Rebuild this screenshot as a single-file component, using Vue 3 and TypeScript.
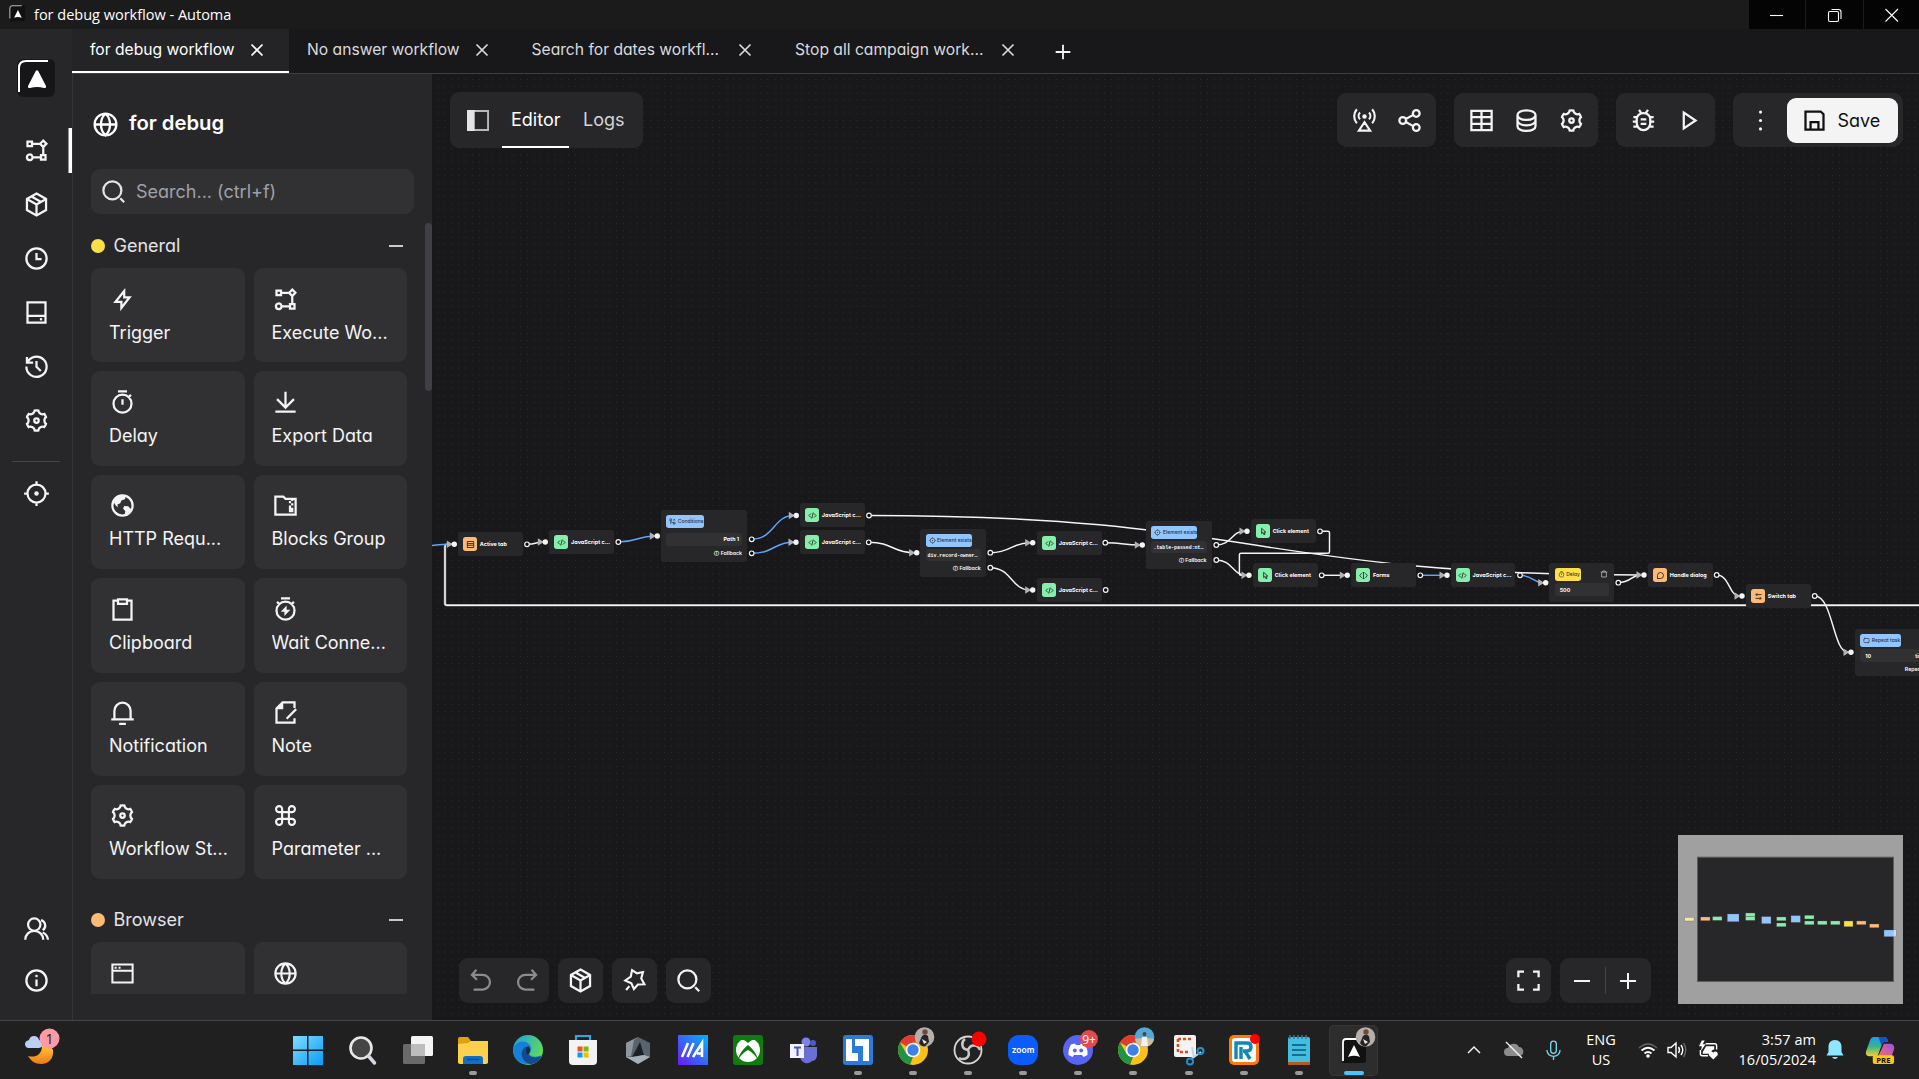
<script setup lang="ts">
interface FlowNode {
  x: number
  y: number
  w: number
  h: number
  label: string
  icon: string
  tone: 'orange' | 'green' | 'blue' | 'yellow'
  kind?: 'badge'
  badgeW?: number
  row?: string
  rowEnd?: string
  align?: 'left' | 'right'
  mono?: boolean
  footer?: string
  trash?: boolean
}

const s = (d: string, w = 2) => `<path d="${d}" fill="none" stroke="currentColor" stroke-width="${w}"/>`

const icons: Record<string, string> = {
  flow: '<path fill-rule="evenodd" d="M6 21.5a3.5 3.5 0 1 1 3.355-4.5H15v-2h2V9.242L14.757 7H9v2H3V3h6v2h5.757L18 1.757 22.243 6 19 9.241V15h2v6h-6v-2H9.355A3.502 3.502 0 0 1 6 21.5zm0-5a1.5 1.5 0 1 0 0 3 1.5 1.5 0 0 0 0-3zm13 .5h-2v2h2v-2zM18 4.586L16.586 6 18 7.414 19.414 6 18 4.586zM7 5H5v2h2V5z"/>',
  box: s('M12 2.2l8.5 4.9v9.8L12 21.8l-8.5-4.9V7.100zM3.500 7.100L12 12l8.500-4.900M12 12v9.800M7.600 4.900l8.500 4.900', 2),
  clock: s('M12 3a9 9 0 1 0 0 18a9 9 0 1 0 0-18M12 7v5.500h4.500'),
  storage: s('M4 3h16v18H4zM4 15h16') + '<path d="M15 17h2v2h-2z"/>',
  history: s('M3.600 9A9 9 0 1 1 3 12M3.500 3.500V8.500H9M12 7v5.200l3.800 3.800'),
  gear: '<path fill-rule="evenodd" d="M3.340 17a10.018 10.018 0 0 1-.978-2.326 3 3 0 0 0 .002-5.347A9.990 9.990 0 0 1 4.865 4.990a3 3 0 0 0 4.631-2.674 9.990 9.990 0 0 1 5.007.002 3 3 0 0 0 4.632 2.672c.579.590 1.093 1.261 1.525 2.010.433.749.757 1.530.978 2.326a3 3 0 0 0-.002 5.347 9.990 9.990 0 0 1-2.501 4.337 3 3 0 0 0-4.631 2.674 9.990 9.990 0 0 1-5.007-.002 3 3 0 0 0-4.632-2.672A10.018 10.018 0 0 1 3.340 17zm5.660.196a4.993 4.993 0 0 1 2.250 2.770c.499.047 1 .048 1.499.001A4.993 4.993 0 0 1 15 17.197a4.993 4.993 0 0 1 3.525-.565c.290-.408.540-.843.748-1.298A4.993 4.993 0 0 1 18 12c0-1.260.470-2.437 1.273-3.334a8.126 8.126 0 0 0-.750-1.298A4.993 4.993 0 0 1 15 6.804a4.993 4.993 0 0 1-2.250-2.770c-.499-.047-1-.048-1.499-.001A4.993 4.993 0 0 1 9 6.803a4.993 4.993 0 0 1-3.525.565 7.990 7.990 0 0 0-.748 1.298A4.993 4.993 0 0 1 6 12c0 1.260-.470 2.437-1.273 3.334a8.126 8.126 0 0 0 .750 1.298A4.993 4.993 0 0 1 9 17.196zM12 15a3 3 0 1 1 0-6 3 3 0 0 1 0 6zm0-2a1 1 0 1 0 0-2 1 1 0 0 0 0 2z"/>',
  target: s('M12 4a8 8 0 1 0 0 16a8 8 0 1 0 0-16M12 1v4M12 19v4M1 12h4M19 12h4') + '<circle cx="12" cy="12" r="2"/>',
  users: s('M2 22a8 8 0 0 1 16 0M10 3a5.500 5.500 0 1 0 0 11a5.500 5.500 0 1 0 0-11M16 4.500a5 5 0 0 1 1.500 9M17.500 15.500A8 8 0 0 1 22.200 22'),
  info: s('M12 3a9 9 0 1 0 0 18a9 9 0 1 0 0-18M12 11v6') + '<path d="M11 7h2v2h-2z"/>',
  globe: s('M12 3a9 9 0 1 0 0 18a9 9 0 1 0 0-18M3 12h18M12 3c-5 4.500-5 13.500 0 18c5-4.500 5-13.500 0-18', 1.900),
  search: s('M11 3a8 8 0 1 0 0 16a8 8 0 1 0 0-16M18 18l3.500 3.500'),
  bolt: s('M13.500 4.500L5.800 14H11v5.500L18.300 10H13.500z'),
  timer: s('M12 5a8 8 0 1 0 0 16a8 8 0 1 0 0-16M8 2h8M12 9v5M17.500 7.200l2-2'),
  download: s('M3 20h18M12 2.500v14M4.500 9L12 16.500L19.500 9'),
  earth: s('M12 3a9 9 0 1 0 0 18a9 9 0 1 0 0-18') + '<path d="M5 5l5-2.500 5 .8-.8 3.200-3.200 1-1 2.500L7.500 11 8 13.500l-2-1.500-1.500-2.500zM13.500 12.500l3.500.2 3.500 3.500-4.500 5-2-1.700.5-2.500-2-2.300z"/>',
  folder: s('M3 4h7l2 2h9v14H3z') + '<path d="M15 8h2v2h-2zM17 10h2v2h-2zM15 12h2v2h-2zM17 8V7h2v1zM15 14h4v4h-4z"/>',
  clipboard: s('M8 4H4v17h16V4h-4M8 3h8v4H8z'),
  timerBolt: s('M12 5a8 8 0 1 0 0 16a8 8 0 1 0 0-16M8 2h8M17.500 7.200l2-2M6.500 7.200l-2-2') + '<path d="M13 8.500v3.700h3.300L11 17.800v-3.900H7.800z"/>',
  bell: s('M4.800 18v-7.500a7.200 7.200 0 0 1 14.400 0V18M2 18h20M9 22h6'),
  note: s('M20 8V3H9.500L4 8.500V21h16v-4M21.500 9L13 17.500') + '<path d="M10 3v6H4z"/>',
  command: s('M9 9h6v6H9zM9 9H6.500a2.700 2.700 0 1 1 2.500-2.500zM15 9V6.500a2.700 2.700 0 1 1 2.500 2.500zM9 15v2.500a2.700 2.700 0 1 1-2.500-2.500zM15 15h2.500a2.700 2.700 0 1 1-2.500 2.500z', 1.900),
  window: s('M3 4h18v16H3zM3 9.500h18', 1.800) + '<path d="M5 6h1.800v1.800H5zM8.500 6h1.800v1.800H8.500z"/>',
  antenna: s('M7 21h10l-5-7.500zM8 10.800a4.300 4.300 0 0 1 0-6M16 10.800a4.300 4.300 0 0 0 0-6M5.200 14.500a9.500 9.500 0 0 1 0-12.500M18.800 14.500a9.500 9.500 0 0 0 0-12.500', 1.900) + '<circle cx="12" cy="8.500" r="2"/>',
  share: s('M6 9a3 3 0 1 0 0 6a3 3 0 1 0 0-6M18 2.700a3 3 0 1 0 0 6a3 3 0 1 0 0-6M18 15.300a3 3 0 1 0 0 6a3 3 0 1 0 0-6M8.700 10.600l6.700-3.600M8.700 13.400l6.700 3.600'),
  table: s('M3 3.500h18v17H3zM3 9h18M3 15h18M12 3.500v17'),
  database: s('M12 3c-5 0-8 2-8 4.200s3 4.300 8 4.300s8-2 8-4.300S17 3 12 3M4 7v5c0 2.300 3 4.300 8 4.300s8-2 8-4.300V7M4 12v5c0 2.300 3 4.300 8 4.300s8-2 8-4.300v-5'),
  bug: s('M12 5.500c-3.500 0-6 2.300-6 5v4a6 6 0 0 0 12 0v-4c0-2.700-2.500-5-6-5M3 9h3M18 9h3M2.500 13H6M18 13h3.500M3 17.500h4M17 17.500h4M8 2.500l2 3M16 2.500l-2 3M9.500 11h5M9.500 15h5'),
  play: s('M7.800 5v14l10.500-7z'),
  dots: '<circle cx="12" cy="4.500" r="1.400"/><circle cx="12" cy="12" r="1.400"/><circle cx="12" cy="19.500" r="1.400"/>',
  save: s('M4 4h13.500L20 6.500V20H4zM8.500 20v-6.500h7V20', 2),
  undo: s('M7.500 2.500L3.500 7l4.500 4.300M4 7h9a6.500 6.500 0 0 1 0 13H5'),
  redo: s('M16.500 2.500L20.500 7l-4.500 4.300M20 7h-9a6.500 6.500 0 0 0 0 13h8'),
  magic: s('M9.800 2.800L14.200 5.700 19.500 4.500 18 10.200 20.800 15.300 15 15.500 11.500 19.500 9.200 14.500 3.800 12 8.700 8.500zM4.500 20.500l3-3.500', 1.900),
  fit: s('M3 9V4h5M16 4h5v5M21 15v5h-5M8 20H3v-5'),
  minus: s('M4 12h16'),
  plus: s('M4 12h16M12 4v16'),
  close: s('M6 6l12 12M18 6L6 18', 1.900),
  code: s('M8 6.500L2.500 12 8 17.500M16 6.500l5.500 5.500-5.500 5.500M14 4l-4 16', 2.200),
  cursor: s('M7 3.500v14l3.500-3 2.500 6 3-1.200-2.500-5.800H18z', 2.200),
  form: s('M7 6L2 12l5 6M17 6l5 6-5 6M12 4v16M9.500 4h5M9.500 20h5', 2.200),
  tabIcon: s('M3.500 4h17v16h-17zM4 9.500h16M4 14h16', 2.200),
  chat: s('M4 20v-8a8 8 0 1 1 8 8z', 2.200),
  swap: s('M20 7H5M9 3L5 7l4 4M4 17h15M15 13l4 4-4 4', 2.200),
  repeat: s('M6 5h12a3 3 0 0 1 3 3v8a3 3 0 0 1-3 3H6a3 3 0 0 1-3-3V8a3 3 0 0 1 3-3M6 2v6M18 16v6', 2.200),
  cond: s('M3 3h6v6H3zM15 3l6 6M21 3l-6 6M6 9v12M6 13l12 5M15 15h6v6h-6z', 2.200),
  trash: s('M2 6.500h20M5 7v14h14V7M8 6V3h8v3', 2),
}

const sideTop = ['flow', 'box', 'clock', 'storage', 'history', 'gear']
const tabs = [
  { label: 'for debug workflow', w: 217, active: true },
  { label: 'No answer workflow', w: 224.5, active: false },
  { label: 'Search for dates workfl...', w: 263.5, active: false },
  { label: 'Stop all campaign work...', w: 263, active: false },
]
const general = [
  ['bolt', 'Trigger'], ['flow', 'Execute Wo...'],
  ['timer', 'Delay'], ['download', 'Export Data'],
  ['earth', 'HTTP Requ...'], ['folder', 'Blocks Group'],
  ['clipboard', 'Clipboard'], ['timerBolt', 'Wait Conne...'],
  ['bell', 'Notification'], ['note', 'Note'],
  ['gear', 'Workflow St...'], ['command', 'Parameter ...'],
]
const browser = ['window', 'globe']
const toolGroups = [['antenna', 'share'], ['table', 'database', 'gear'], ['bug', 'play']]

const basic = (x: number, y: number, label: string, icon: string, tone: FlowNode['tone']): FlowNode => ({ x, y, w: 64.700, h: 24.200, label, icon, tone })
const nodes: FlowNode[] = [
  basic(458, 532, 'Active tab', 'tabIcon', 'orange'),
  basic(549.300, 530, 'JavaScript c...', 'code', 'green'),
  { x: 661, y: 510, w: 86.300, h: 52, label: 'Conditions', icon: 'cond', tone: 'blue', kind: 'badge', badgeW: 38, row: 'Path 1', align: 'right', footer: 'ⓘ Fallback' },
  basic(800, 503.200, 'JavaScript c...', 'code', 'green'),
  basic(800, 530.300, 'JavaScript c...', 'code', 'green'),
  { x: 920.300, y: 529, w: 65.700, h: 48, label: 'Element exists', icon: 'target', tone: 'blue', kind: 'badge', badgeW: 46, row: 'div.record-owner…', mono: true, footer: 'ⓘ Fallback' },
  basic(1037, 531, 'JavaScript c...', 'code', 'green'),
  basic(1037, 578, 'JavaScript c...', 'code', 'green'),
  { x: 1146.200, y: 521, w: 65.700, h: 48, label: 'Element exists', icon: 'target', tone: 'blue', kind: 'badge', badgeW: 46, row: '.table-passed:nt…', mono: true, footer: 'ⓘ Fallback' },
  basic(1251, 519, 'Click element', 'cursor', 'green'),
  basic(1253, 563, 'Click element', 'cursor', 'green'),
  basic(1351.200, 563, 'Forms', 'form', 'green'),
  basic(1450.800, 563, 'JavaScript c...', 'code', 'green'),
  { x: 1549.400, y: 563, w: 64.700, h: 39, label: 'Delay', icon: 'timer', tone: 'yellow', kind: 'badge', badgeW: 26.700, row: '500', trash: true },
  basic(1648, 563, 'Handle dialog', 'chat', 'orange'),
  basic(1746, 584, 'Switch tab', 'swap', 'orange'),
  { x: 1855, y: 629, w: 86, h: 47, label: 'Repeat task', icon: 'repeat', tone: 'blue', kind: 'badge', badgeW: 41, row: '10', rowEnd: 'times', footer: 'Repeat from' },
]

const inputs: [number, number][] = [
  [454.300, 544.300], [545.300, 542], [657.300, 536], [796.300, 515.500], [796, 542.300], [916.700, 552.700],
  [1032.700, 542.700], [1032.700, 590], [1142.300, 545], [1247, 531.300], [1249, 575.300], [1347.300, 575.300],
  [1447, 575.300], [1545.700, 582.700], [1644, 575], [1742, 596], [1851, 652.300],
]
const outputs: [number, number][] = [
  [527, 544.300], [618.300, 542], [751.700, 539.300], [751.700, 553.300], [869, 515.500], [868.700, 542.300],
  [990.300, 552.700], [990.300, 567.700], [1105.300, 542.700], [1105.700, 590], [1216.300, 545], [1216.300, 560],
  [1320, 531.300], [1321.700, 575.300], [1420.300, 575.300], [1520, 575.300], [1618.300, 582.700], [1716.700, 575], [1814.700, 596],
]
// [from output, to input, highlighted]
const links: [number, number, boolean][] = [
  [0, 1, false], [1, 2, true], [2, 3, true], [3, 4, true], [5, 5, false], [6, 6, false], [7, 7, false],
  [8, 8, false], [10, 9, false], [11, 10, false], [13, 11, false], [14, 12, true], [15, 13, true],
  [16, 14, false], [4, 14, false], [17, 15, false], [18, 16, false],
]
const edges = links.map(([a, b, blue]) => {
  const [x1, y1] = outputs[a]
  const [x2, y2] = inputs[b]
  const m = (x1 + x2) / 2
  return { d: `M${x1} ${y1}C${m} ${y1} ${m} ${y2} ${x2 - 3} ${y2}`, blue }
})

const miniNodes: [number, number, number, number, string][] = [
  [615, 293, 26, 9, '#f5e9a8'], [663, 292, 26, 9, '#fdba74'], [699, 291, 26, 9, '#86efac'], [743, 283, 33, 21, '#93c5fd'],
  [798, 280, 26, 9, '#86efac'], [798, 291, 26, 9, '#86efac'], [846, 291, 26, 19, '#93c5fd'], [891, 292, 26, 9, '#86efac'],
  [891, 310, 26, 9, '#86efac'], [934, 288, 26, 18, '#93c5fd'], [975, 287, 26, 9, '#86efac'], [975, 304, 26, 9, '#86efac'],
  [1014, 304, 26, 9, '#86efac'], [1053, 304, 26, 9, '#86efac'], [1093, 304, 25, 15, '#fde047'], [1131, 304, 26, 9, '#fdba74'],
  [1170, 313, 26, 9, '#fdba74'], [1213, 331, 34, 18, '#93c5fd'],
]

const avatar = (shirt: string, bg: string) => `<circle cx="26.500" cy="2" r="9.800" fill="${bg}"/><path d="M21 8l3-7q3-3 6 0l1 6-4 4.500q-4 0-6-3.500z" fill="${shirt}"/><path d="M24 4l5 3-3 2z" fill="#ece6e0"/><circle cx="27" cy="-3" r="2.700" fill="#6a4a3a"/>`
const chrome = '<circle cx="15" cy="15" r="15" fill="#fbc116"/><path d="M15 15L2 7.500A15 15 0 0 1 28 7.500H15z" fill="#e33b2e"/><path d="M2 7.500L8.500 18.700 15 22l-3 7.700A15 15 0 0 1 2 7.500z" fill="#229342"/><circle cx="15" cy="15" r="7.300" fill="#fff"/><circle cx="15" cy="15" r="5.700" fill="#3f7fe8"/>'
const apps: { art: string; run?: boolean; active?: boolean }[] = [
  { art: '<g fill="url(#gWin)"><path d="M0 1h14v13.500H0zM15.500 1H30v13.500H15.500zM0 16h14v14H0zM15.500 16H30v14H15.500z"/></g>' },
  { art: '<circle cx="13" cy="13" r="10.500" fill="#454545" stroke="#e8e8e8" stroke-width="2.600"/><path d="M20.500 21l6 7" stroke="#d5d8de" stroke-width="3.500" stroke-linecap="round"/>' },
  { art: '<rect x="0" y="9" width="22" height="20" rx="1.500" fill="#6a6a6a"/><rect x="8" y="1" width="22" height="20" rx="1.500" fill="#f4f4f4"/><path d="M8 9h14v12H8z" fill="#bdbdbd"/>' },
  { run: true, art: '<path d="M0 4q0-2 2-2h8l3 4h15q2 0 2 2v20H0z" fill="#e0a10c"/><path d="M0 9l10-1 3-2h17v21q0 2-2 2H2q-2 0-2-2z" fill="#ffd04c"/><path d="M5 29v-5q0-3 3-3h14q3 0 3 3v5z" fill="#0f6fc6"/><path d="M9 24.500h12" stroke="#0a4c92" stroke-width="1.500"/>' },
  { art: '<circle cx="15" cy="15" r="15" fill="url(#gEdge)"/><path d="M0 15C2 6 12 4 17 10c3 4 0 7-1 9 3 4 9 3 13 1-5 13-28 13-29-5z" fill="#1680d8"/><path d="M12 12c-7 6-2 17 7 17 5-1 8-4 9-8-4 2-10 2-12-1-2-4-1-5 0-8z" fill="#124a94"/><path d="M15 11c-3 3-2 7 0 9 1-2 4-4 1-8z" fill="#1f2b33"/>' },
  { art: '<path d="M8 8V1h14v7" fill="none" stroke="#29a8e8" stroke-width="2.200"/><path d="M1 5h28v21q0 4-4 4H5q-4 0-4-4z" fill="#f3f3f3"/><path d="M9.500 11.500h5v5h-5z" fill="#f05125"/><path d="M15.500 11.500h5v5h-5z" fill="#7fbb00"/><path d="M9.500 17.500h5v5h-5z" fill="#00a3ee"/><path d="M15.500 17.500h5v5h-5z" fill="#ffb900"/>' },
  { art: '<path d="M15 2l12 6v14l-12 7-12-7V8z" fill="#59636b"/><path d="M15 2l-4 3-3 16-5 1V8z" fill="#8c979e"/><path d="M17 7l4 13-12 2z" fill="#1b2126"/><path d="M3 22l6 0 12-2 6 2-12 7z" fill="#a5b0b7"/>' },
  { art: '<path d="M0 0h30v30H0z" fill="url(#gMa)"/><path d="M4 22L10 8M9.500 22L15.500 8M15 22l9-14v14M19 18.500h5" stroke="#fff" stroke-width="2.600" fill="none"/>' },
  { art: '<rect width="30" height="30" rx="3" fill="#107c10"/><circle cx="15" cy="15" r="12" fill="#fff"/><path d="M7 5q4-1 8 3 4-4 8-3-4-3-8-2-4-1-8 2zM5 25c1-6 5-11 10-15 5 4 9 9 10 15-3-5-6-8-10-10-4 2-7 5-10 10z" fill="#107c10"/>' },
  { art: '<circle cx="18" cy="7" r="4.500" fill="#7b83eb"/><circle cx="25" cy="8" r="3" fill="#5059c9"/><path d="M12 12h17v9q-1 5-5 5-3 3-7 2-5-2-5-7z" fill="#6870d4"/><path d="M2 9h14v14H2z" fill="#f1f2ff"/><path d="M6 12.500h7M9.500 13v8" stroke="#4b53bc" stroke-width="2"/>' },
  { run: true, art: '<rect width="30" height="30" rx="3" fill="#2d7bd8"/><path d="M3 4h6v14h6v8H3zM12 4h14v22h-6V11h-8z" fill="#fff"/>' },
  { run: true, art: chrome + avatar('#252525', '#b7b0aa') },
  { run: true, art: '<circle cx="15" cy="15" r="13.500" fill="#222" stroke="#d7d7d7" stroke-width="1.800"/><path d="M15 15C8 14 8 7 12 4M15 15c3-7 10-5 12 0M15 15c3 7-3 11-9 8" fill="none" stroke="#c9c9c9" stroke-width="2.500"/><circle cx="26" cy="4" r="7.500" fill="#f00"/>' },
  { run: true, art: '<rect width="30" height="30" rx="11" fill="#0b5cff"/><text x="15" y="17.800" text-anchor="middle" fill="#fff" font-family="Inter,sans-serif" font-size="8.500" font-weight="600">zoom</text>' },
  { run: true, art: '<circle cx="15" cy="15" r="15" fill="#5865f2"/><path d="M8 9.500l4-1 1 1.500h4l1-1.500 4 1q3 5 2.500 10.500l-4 2-1.500-2h-8l-1.500 2-4-2Q5 14.500 8 9.500z" fill="#fff"/><circle cx="11.800" cy="15.500" r="1.900" fill="#5865f2"/><circle cx="18.200" cy="15.500" r="1.900" fill="#5865f2"/><circle cx="26" cy="4" r="9" fill="#e5484d"/><text x="26" y="8.500" text-anchor="middle" fill="#fff" font-family="Open Sans,sans-serif" font-size="12">9+</text>' },
  { run: true, art: chrome + '<circle cx="26.500" cy="2" r="9.800" fill="#55a7d8"/><path d="M17 4q9-2 19 0-1 7-9.500 8Q18 11 17 4z" fill="#cdbb9c"/><path d="M23 11l1-9h5l1 9z" fill="#f2f2f0"/><circle cx="26.500" cy="-1" r="2" fill="#5a4034"/>' },
  { run: true, art: '<rect x="0" y="0" width="22" height="22" rx="2" fill="#f3f3f3"/><path d="M4 4h13M4 4v13h10" stroke="#dd4b24" stroke-width="2.600" stroke-dasharray="3 2" fill="none"/><path d="M18 12l2 11M27 17l-10 7" stroke="#b9dbe9" stroke-width="2"/><circle cx="26.500" cy="16" r="3" fill="none" stroke="#2491cf" stroke-width="2"/><circle cx="16" cy="26.500" r="3" fill="none" stroke="#2491cf" stroke-width="2"/>' },
  { run: true, art: '<rect width="30" height="30" rx="5" fill="#ff7a00"/><rect x="3" y="3" width="24" height="24" rx="3" fill="#fff"/><path d="M7 24V8h11q4 0 4 4t-4 4h-4M16 16l5 8M12 12v12" fill="none" stroke="#0d8ab5" stroke-width="3.400"/><circle cx="26" cy="4" r="5" fill="#f00"/>' },
  { run: true, art: '<rect x="4" y="2" width="22" height="27" rx="2" fill="#42bfe0"/><path d="M4 27h22v3H4z" fill="#b45a1b"/><path d="M8 10h14M8 15h14M8 20h14" stroke="#156f91" stroke-width="2"/><path d="M6 0v4M10 0v4M14 0v4M18 0v4M22 0v4" stroke="#277f9d" stroke-width="1.500"/>' },
  { run: true, active: true, art: '<rect x="3" y="3" width="24" height="25" rx="3" fill="#111"/><path d="M4 26V7q0-3 3-3h14" fill="none" stroke="#fff" stroke-width="1.800"/><path d="M15 10l6 12q-6-2.500-12 0z" fill="#fff"/>' + avatar('#252525', '#b7b0aa') },
]
</script>

<template>
  <div class="screen">
    <header class="titlebar">
      <svg class="mini-logo" viewBox="0 0 20 20"><rect x="1" y="1" width="18" height="18" rx="3" fill="#111" /><path d="M1 16V4q0-3 3-3h11" fill="none" stroke="#bbb" stroke-width="1.200" /><path d="M10.500 6l4.500 9q-4.500-1.800-9 0z" fill="#fff" /></svg>
      <span class="title-text">for debug workflow - Automa</span>
      <div class="win-btns">
        <i><svg viewBox="0 0 14 14"><path d="M0 7.500h13" /></svg></i>
        <i><svg viewBox="0 0 14 14"><rect x=".5" y="3.500" width="10" height="10" rx="1.500" /><path d="M3.500 1.500h7q2.500 0 2.500 2.500v7" /></svg></i>
        <i><svg viewBox="0 0 14 14"><path d="M.5 1l12.500 12.500M13 1L.5 13.500" /></svg></i>
      </div>
    </header>

    <div class="app">
      <nav class="side">
        <svg class="logo" viewBox="0 0 38 38"><rect width="38" height="38" rx="6" fill="#161618" /><path d="M2 33V9q0-7 7-7h22" fill="none" stroke="#fff" stroke-width="2" /><path d="M18.500 12.500q1.500-2.500 3 0l7.500 14.500q.8 2.500-2 2-7-2-14 0-2.800.5-2-2z" fill="#fff" /></svg>
        <div class="side-list">
          <a v-for="(n, i) in sideTop" :key="n" :class="{ on: i === 0 }"><svg class="ic" viewBox="0 0 24 24" v-html="icons[n]" /></a>
        </div>
        <hr />
        <a class="pick"><svg class="ic" viewBox="0 0 24 24" v-html="icons.target" /></a>
        <div class="side-bottom">
          <a><svg class="ic" viewBox="0 0 24 24" v-html="icons.users" /></a>
          <a><svg class="ic" viewBox="0 0 24 24" v-html="icons.info" /></a>
        </div>
      </nav>

      <div class="main">
        <div class="tabs">
          <div v-for="t in tabs" :key="t.label" class="tab" :class="{ on: t.active }" :style="{ width: t.w + 'px' }">
            <span>{{ t.label }}</span>
            <svg viewBox="0 0 24 24" v-html="icons.close" />
          </div>
          <svg class="add" viewBox="0 0 24 24" v-html="icons.plus" />
        </div>

        <div class="work">
          <aside class="panel">
            <h1><svg viewBox="0 0 24 24" v-html="icons.globe" /><span>for debug</span></h1>
            <div class="search"><svg class="ic" viewBox="0 0 24 24" v-html="icons.search" />Search... (ctrl+f)</div>
            <div class="blocks">
              <div class="cat"><b class="yellow" /><span>General</span><i /></div>
              <div class="grid">
                <div v-for="c in general" :key="c[1]" class="card"><svg class="ic" viewBox="0 0 24 24" v-html="icons[c[0]]" /><p>{{ c[1] }}</p></div>
              </div>
              <div class="cat second"><b class="orange" /><span>Browser</span><i /></div>
              <div class="grid">
                <div v-for="c in browser" :key="c" class="card"><svg class="ic" viewBox="0 0 24 24" v-html="icons[c]" /></div>
              </div>
            </div>
            <div class="thumb" />
          </aside>

          <section class="canvas">
            <svg class="edges" viewBox="432 74 1487 946">
              <defs>
                <pattern id="dots" x="437.500" y="79" width="6.870" height="6.870" patternUnits="userSpaceOnUse"><rect width="1" height="1" fill="#2e2e31" /></pattern>
              </defs>
              <rect x="432" y="74" width="1487" height="946" fill="url(#dots)" />
              <path class="halo" d="M1919 605.300H447q-2 0-2-2V546" />
              <path class="edge" d="M1919 605.300H447q-2 0-2-2V546q0-1.700 2-1.700h6" />
              <path class="edge blue" d="M432 545.500q6-1 15-1.200" />
              <path class="edge" d="M1320 531.300h8q1.500 0 1.500 1.500v19q0 1.500-1.500 1.500h-87q-1.600 0-1.600 1.500v19q0 1.500 1.500 1.500h6" />
              <path v-for="(e, i) in edges" :key="i" class="edge" :class="{ blue: e.blue }" :d="e.d" />
              <path v-for="(p, i) in inputs" :key="'a' + i" fill="#b1b1b7" :d="`M${p[0] - 7.500} ${p[1] - 3.800}l6 3.800l-6 3.800z`" />
              <circle v-for="(p, i) in inputs" :key="'i' + i" :cx="p[0]" :cy="p[1]" r="2.700" fill="#f4f4f5" />
              <circle v-for="(p, i) in outputs" :key="'o' + i" :cx="p[0]" :cy="p[1]" r="2.300" fill="#0c0c0e" stroke="#f4f4f5" stroke-width="1.200" />
            </svg>

            <div
              v-for="(n, i) in nodes" :key="i" class="node" :class="n.kind || 'basic'"
              :style="{ left: n.x - 432 + 'px', top: n.y - 74 + 'px', width: n.w + 'px', height: n.h + 'px' }"
            >
              <template v-if="n.kind">
                <div class="node-head">
                  <span class="badge" :class="n.tone" :style="{ width: n.badgeW + 'px' }"><svg viewBox="0 0 24 24" v-html="icons[n.icon]" />{{ n.label }}</span>
                  <svg v-if="n.trash" class="bin" viewBox="0 0 24 24" v-html="icons.trash" />
                </div>
                <div class="row" :class="{ mono: n.mono, end: n.align === 'right' }"><span>{{ n.row }}</span><span v-if="n.rowEnd" class="times">{{ n.rowEnd }}</span></div>
                <div v-if="n.footer" class="foot">{{ n.footer }}</div>
              </template>
              <template v-else>
                <span class="square" :class="n.tone"><svg viewBox="0 0 24 24" v-html="icons[n.icon]" /></span>
                <span>{{ n.label }}</span>
              </template>
            </div>

            <div class="bar top">
              <div class="box switcher">
                <svg class="panel-ic" viewBox="0 0 24 22"><path d="M1 1h21v20H1z" fill="none" stroke="#b9b9bb" stroke-width="2" /><path d="M0 0h8v22H0z" fill="#e4e4e7" /></svg>
                <span class="on">Editor</span><span>Logs</span>
              </div>
              <div class="spacer" />
              <div v-for="(g, i) in toolGroups" :key="i" class="box">
                <a v-for="n in g" :key="n"><svg class="ic" viewBox="0 0 24 24" v-html="icons[n]" /></a>
              </div>
              <div class="box">
                <a><svg class="ic" viewBox="0 0 24 24" v-html="icons.dots" /></a>
                <button><svg class="ic" viewBox="0 0 24 24" v-html="icons.save" />Save</button>
              </div>
            </div>

            <div class="bar bottom">
              <div class="chip"><a class="dim"><svg class="ic" viewBox="0 0 24 24" v-html="icons.undo" /></a><a class="dim"><svg class="ic" viewBox="0 0 24 24" v-html="icons.redo" /></a></div>
              <div class="chip"><a><svg class="ic" viewBox="0 0 24 24" v-html="icons.box" /></a></div>
              <div class="chip"><a><svg class="ic" viewBox="0 0 24 24" v-html="icons.magic" /></a></div>
              <div class="chip"><a><svg class="ic" viewBox="0 0 24 24" v-html="icons.search" /></a></div>
              <div class="spacer" />
              <div class="chip"><a><svg class="ic" viewBox="0 0 24 24" v-html="icons.fit" /></a></div>
              <div class="chip zoomer"><a><svg viewBox="0 0 24 24" v-html="icons.minus" /></a><a><svg viewBox="0 0 24 24" v-html="icons.plus" /></a></div>
              <svg class="minimap" viewBox="594 45 675 507">
                <rect x="594" y="45" width="675" height="507" fill="#a0a0a0" />
                <rect x="652.500" y="111.500" width="588" height="373" fill="#27272a" stroke="#5c5c5e" stroke-width="3" />
                <rect v-for="(m, i) in miniNodes" :key="i" :x="m[0] - 1" :y="m[1] - 1" :width="m[2] + 2" :height="m[3] + 2" :fill="m[4]" stroke="#555" stroke-opacity=".45" stroke-width="2" />
                <rect x="1241" y="330" width="7" height="19" fill="#c8dcf5" />
              </svg>
            </div>
          </section>
        </div>
      </div>
    </div>

    <footer class="taskbar">
      <svg class="defs" width="0" height="0">
        <defs>
          <linearGradient id="gWin" x1="0" y1="0" x2="1" y2="1"><stop offset="0" stop-color="#7fdcff" /><stop offset="1" stop-color="#0a9cf5" /></linearGradient>
          <linearGradient id="gEdge" x1="0" y1="0" x2="1" y2=".5"><stop offset="0" stop-color="#1b9de2" /><stop offset="1" stop-color="#5fdc5a" /></linearGradient>
          <linearGradient id="gMa" x1="0" y1="1" x2="1" y2="0"><stop offset="0" stop-color="#6a1cf5" /><stop offset="1" stop-color="#00b4ff" /></linearGradient>
          <linearGradient id="gMoon" x1="0" y1="0" x2="0" y2="1"><stop offset="0" stop-color="#ffc83a" /><stop offset="1" stop-color="#f07818" /></linearGradient>
          <linearGradient id="gCo" x1="0" y1="0" x2="0" y2="1"><stop offset="0" stop-color="#1a9cf0" /><stop offset=".5" stop-color="#3ab58a" /><stop offset="1" stop-color="#f6d030" /></linearGradient>
          <linearGradient id="gCo2" x1="0" y1="1" x2="1" y2="0"><stop offset="0" stop-color="#ff7050" /><stop offset="1" stop-color="#9a50f0" /></linearGradient>
        </defs>
      </svg>
      <svg class="weather" viewBox="0 0 36 36">
        <path d="M17 16c3-1 10 0 11 4 1 8-4 14-12 14-6 0-10-3-13-8 7 2 14-1 14-10z" fill="url(#gMoon)" />
        <path d="M3 18q-3-1-3-4 0-3 4-4 1-4 5-4 4 0 5 4 4 1 4 4t-4 4z" fill="#b9cff5" />
        <circle cx="24.500" cy="8.500" r="10" fill="#ff99a4" /><text x="24.500" y="13.500" text-anchor="middle" font-size="14" font-family="Open Sans,sans-serif" fill="#1b1b1b">1</text>
      </svg>
      <div class="apps">
        <div v-for="(a, i) in apps" :key="i" class="app-item" :class="{ active: a.active }">
          <svg viewBox="0 0 30 30" v-html="a.art" />
          <i v-if="a.run" />
        </div>
      </div>
      <div class="tray">
        <svg class="chev" viewBox="0 0 16 16"><path d="M2 11l6-6 6 6" fill="none" stroke="#eee" stroke-width="1.500" /></svg>
        <svg class="cloud" viewBox="0 0 22 18"><path d="M5 15a4 4 0 0 1 0-8 6 6 0 0 1 11-1 4.600 4.600 0 0 1 1 9z" fill="#8c8c8c" /><path d="M3 1l16 16" stroke="#eee" stroke-width="1.400" /></svg>
        <svg class="mic" viewBox="0 0 16 22"><rect x="5" y="1" width="6" height="13" rx="3" fill="none" stroke="#7fd6ea" stroke-width="1.400" /><path d="M1 10.500c0 9 14 9 14 0M8 17v4" fill="none" stroke="#7fd6ea" stroke-width="1.400" /></svg>
        <div class="lang">ENG<br />US</div>
        <svg class="wifi" viewBox="0 0 20 18"><path d="M1 7q9-8 18 0" fill="none" stroke="#666" stroke-width="1.500" /><path d="M3.500 9.500q6.500-5.500 13 0M6.500 12.500q3.500-3 7 0" fill="none" stroke="#fff" stroke-width="1.700" /><circle cx="10" cy="15" r="1.800" fill="#fff" /></svg>
        <svg class="vol" viewBox="0 0 20 18"><path d="M1 6.500h3l5-4.500v14l-5-4.500H1z" fill="none" stroke="#fff" stroke-width="1.400" /><path d="M11.500 6q2 3 0 6M14 4q3.500 5 0 10" fill="none" stroke="#fff" stroke-width="1.400" /><path d="M16.500 2q4.500 7 0 14" fill="none" stroke="#666" stroke-width="1.400" /></svg>
        <svg class="bat" viewBox="0 0 22 20"><path d="M8 3.500h9.500q2 0 2 2v4M2.500 10v4q0 2 2 2h6" fill="none" stroke="#fff" stroke-width="1.500" /><path d="M8.500 6H17v3.500q-3 0-3.500 4.500H5v-2zM4 0L1 6h3l-1 5 5-7H5l2-4z" fill="#fff" /><path d="M16 20l-4.500-4.500q-1-3 2-4 2 0 2.500 1.500.5-1.500 2.500-1.500 3 1 2 4z" fill="#fff" /></svg>
        <div class="time">3:57 am<br />16/05/2024</div>
        <svg class="ring" viewBox="0 0 18 20"><path d="M9 0c4.500 0 6.500 3 6.500 7v5l2 3.500H.5L2.500 12V7c0-4 2-7 6.500-7zM6 17h6q-3 4-6 0z" fill="#8fe6ff" /></svg>
        <svg class="copilot" viewBox="0 0 30 30"><path d="M8 1h11q3 0 4 5h-3q-3 0-4 4l-3 8q-1 3-4 3H3q-4-1-3-5L4 5q1-4 4-4z" fill="url(#gCo)" /><path d="M13 1h6q3 0 4 5h-3q-3 0-4 4z" fill="#1550c8" /><path d="M19 8h7q4 1 3 6l-3 8H12l5-10q1-4 2-4z" fill="url(#gCo2)" /><rect x="7" y="20" width="22" height="9" rx="2" fill="#ffc80a" /><text x="18" y="27.600" text-anchor="middle" font-size="8" font-weight="700" font-family="Open Sans,sans-serif" fill="#111">PRE</text></svg>
      </div>
    </footer>
  </div>
</template>

<style>
body { margin: 0; background: #18181b; overflow: hidden; }
</style>

<style scoped>
* { box-sizing: border-box; }
.screen { width: 1919px; height: 1079px; display: flex; flex-direction: column; overflow: hidden; color: #f4f4f5; font-family: Inter, "Noto Sans", sans-serif; font-size: 18px; font-feature-settings: "cv02", "cv03", "cv04", "cv11"; }
svg { display: block; fill: currentColor; flex: none; overflow: visible; }
.ic { width: 27px; height: 27px; }
a { display: flex; align-items: center; justify-content: center; }
.spacer { flex: 1; }

.titlebar { height: 29px; flex: none; display: flex; align-items: center; background: #1b1b1b; font-family: "Open Sans", "Noto Sans", sans-serif; font-size: 14.500px; color: #fff; }
.mini-logo { width: 17px; height: 17px; margin: 0 8px 3px 9px; }
.title-text { flex: 1; }
.win-btns { display: flex; gap: 1px; height: 29px; }
.win-btns i { width: 57px; background: #040404; display: flex; align-items: center; justify-content: center; }
.win-btns i:first-child { width: 56px; }
.win-btns i:last-child { width: 55px; }
.win-btns svg { width: 14px; height: 14px; fill: none; stroke: #fff; stroke-width: 1.100; }

.app { flex: 1; min-height: 0; display: flex; }
.side { width: 73px; background: #27272a; border-right: 1px solid #343437; display: flex; flex-direction: column; align-items: center; padding-top: 30px; }
.logo { width: 38px; height: 38px; }
.side-list { margin-top: 26px; width: 72px; }
.side-list a { height: 54px; }
.side-list a.on { box-shadow: inset -3.500px 0 0 0 #fff; height: 45px; margin: 5px 0 4px; }
hr { width: 48px; height: 1px; border: 0; background: #444447; margin: 14px 0 0; }
.pick { margin-top: 18px; height: 27px; }
.side-bottom { margin-top: auto; padding-bottom: 13px; }
.side-bottom a { height: 52.500px; }

.main { flex: 1; min-width: 0; display: flex; flex-direction: column; }
.tabs { height: 45px; flex: none; display: flex; border-bottom: 1px solid #3f3f42; background: #18181b; margin-left: -1px; }
.tab { display: flex; align-items: center; justify-content: space-between; padding: 0 21px 3px 18px; font-size: 15.650px; color: #dadadd; white-space: nowrap; height: 44px; }
.tab svg { width: 22px; height: 22px; margin-top: 1px; }
.tab.on { background: #242427; color: #fff; border-bottom: 2px solid #fff; padding-bottom: 1px; }
.add { width: 22px; height: 22px; margin: 12px 0 0 12px; }

.work { flex: 1; min-height: 0; display: flex; }
.panel { width: 359px; background: #27272a; padding: 0 18px; position: relative; }
h1 { margin: 32px 0 0; height: 36px; font-size: 20.250px; font-weight: 600; display: flex; align-items: center; gap: 9px; color: #fff; }
h1 span { margin-top: -3px; }
h1 svg { width: 29px; height: 29px; }
.search { height: 45px; margin-top: 27px; border-radius: 9px; background: #313134; color: #a0a0a8; display: flex; align-items: center; padding-left: 9px; gap: 9px; }
.search svg { color: #e4e4e7; }
.blocks { height: 780px; overflow: hidden; }
.cat { display: flex; align-items: center; height: 27px; margin: 18px 0 9px; color: #e4e4e7; }
.cat b { width: 14px; height: 14px; border-radius: 50%; margin-right: 8.500px; }
.cat span { flex: 1; }
.cat i { width: 14px; height: 2px; background: #c9c9cc; margin-right: 11px; }
.second { margin-top: 27px; }
.grid { display: grid; grid-template-columns: 153.500px 153.500px; gap: 9px; }
.card { height: 94.400px; border-radius: 9px; background: #313134; padding: 17.500px 18px; color: #f4f4f5; }
.card p { margin: 6px 0 0; line-height: 27px; white-space: nowrap; overflow: hidden; }
.thumb { position: absolute; right: 0; top: 149px; width: 7px; height: 168px; border-radius: 4px; background: #3f3f46; }

.canvas { flex: 1; position: relative; overflow: hidden; background: #18181b; display: flex; flex-direction: column; justify-content: space-between; }
.edges { position: absolute; inset: 0; width: 1487px; height: 946px; }
.edge { fill: none; stroke: #f4f4f5; stroke-width: 1.450; }
.edge.blue { stroke: #60a5fa; background: none; }
.halo { fill: none; stroke: #77777a; stroke-width: 2.600; }

.node { position: absolute; border-radius: 2.700px; background: #27272a; font-size: 5.450px; font-weight: 700; color: #fff; white-space: nowrap; }
.node.basic { display: flex; align-items: center; gap: 2.600px; padding-left: 5.200px; }
.square { width: 14px; height: 14px; border-radius: 2.700px; display: flex; align-items: center; justify-content: center; color: #1c1c1f; }
.square svg { width: 9px; height: 9px; }
.node.badge { padding: 5.200px 5.300px 0; overflow: hidden; }
.node-head { display: flex; justify-content: space-between; align-items: center; }
span.badge { height: 12.600px; border-radius: 2.700px; display: flex; align-items: center; gap: 1.500px; padding-left: 3px; font-size: 5px; font-weight: 500; color: #27313d; }
span.badge svg { width: 7px; height: 7px; }
.bin { width: 8px; height: 8px; margin-right: 0.500px; color: #d4d4d8; }
.orange { background: #fdba74; }
.green { background: #86efac; }
.blue { background: #93c5fd; }
.yellow { background: #fde047; }
.row { margin-top: 2.400px; height: 12.800px; border-radius: 2.700px; background: #313134; padding: 0 3px 0 5px; display: flex; align-items: center; justify-content: space-between; font-size: 5.300px; }
.row.end { justify-content: flex-end; margin-top: 5px; }
.row.mono { font-family: "Liberation Mono", monospace; font-size: 4.900px; padding: 0 2px; height: 11.700px; }
.times { margin-right: 3px; }
.foot { text-align: right; line-height: 6px; margin-top: 4.200px; font-size: 5.200px; font-weight: 600; }

.bar { position: relative; display: flex; gap: 18px; padding: 0 16.500px 0 18px; }
.bar.top { padding-top: 18px; align-items: center; }
.box { height: 54px; border-radius: 9px; background: #27272a; padding: 4.500px; display: flex; }
.box a { width: 45px; height: 45px; }
.box a svg { margin-left: 1px; }
.box button { width: 111px; height: 45px; margin-left: 4.500px; border: 0; border-radius: 9px; background: #f4f4f5; color: #111113; font: inherit; font-feature-settings: inherit; display: flex; align-items: center; gap: 9.500px; padding: 0 0 0 14px; }
.switcher { width: 193px; height: 56px; padding: 0 9px 0 16px; align-items: stretch; color: #d4d4d8; }
.panel-ic { width: 23px; height: 21px; align-self: center; margin-left: 1px; }
.switcher span { padding: 0 9px; line-height: 56px; margin-right: -4px; }
.switcher span.on { color: #fff; border-bottom: 2px solid #fff; margin: 0 4.500px 0 12px; }
.bar.bottom { gap: 9px; align-items: flex-end; padding: 0 16px 16px 27px; }
.chip { height: 45px; border-radius: 9px; background: #27272a; display: flex; margin-bottom: 0.700px; }
.chip a { width: 45px; }
.chip svg { width: 27px; height: 27px; }
.chip .dim { color: #8c8c8f; }
.zoomer { margin-right: 18.500px; align-items: center; }
.zoomer a { height: 27px; width: 45.500px; }
.zoomer a + a { border-left: 1px solid #444447; }
.zoomer svg { width: 24px; height: 24px; }
.bar.bottom .minimap { width: 225px; height: 169px; overflow: hidden; }

.taskbar { height: 59px; flex: none; background: #202020; border-top: 1px solid #454545; display: flex; align-items: center; font-family: "Open Sans", "Noto Sans", sans-serif; font-feature-settings: normal; }
.defs { position: absolute; }
.weather { width: 36px; height: 36px; margin: 0 0 4px 25px; }
.apps { display: flex; margin-left: 219.500px; }
.app-item { width: 49px; height: 51px; margin: 0 3.030px; border-radius: 5px; position: relative; display: flex; justify-content: center; padding-top: 10px; }
.app-item svg { width: 30px; height: 30px; }
.app-item i { position: absolute; bottom: 1px; left: 20.500px; width: 8px; height: 4px; border-radius: 2px; background: #9a9a9a; }
.app-item.active { background: #2d2d2d; box-shadow: inset 0 0 0 1px #363636; }
.app-item.active i { width: 20px; left: 14.500px; background: #4cc2ff; }
.tray { margin-left: auto; display: flex; align-items: center; color: #fff; font-size: 14.500px; line-height: 20px; }
.chev { width: 16px; height: 16px; }
.cloud { width: 22px; height: 18px; margin-left: 21px; }
.mic { width: 15px; height: 21px; margin-left: 21px; }
.lang { width: 60px; margin-left: 10.500px; text-align: center; }
.wifi { width: 20px; height: 18px; margin-left: 7px; }
.vol { width: 20px; height: 18px; margin-left: 9px; }
.bat { width: 21px; height: 20px; margin-left: 11px; }
.time { width: 90px; margin-left: 7px; text-align: right; letter-spacing: 0.050px; }
.ring { width: 18px; height: 20px; margin-left: 10px; }
.copilot { width: 29px; height: 29px; margin: 0 24px 0 22px; }
</style>
